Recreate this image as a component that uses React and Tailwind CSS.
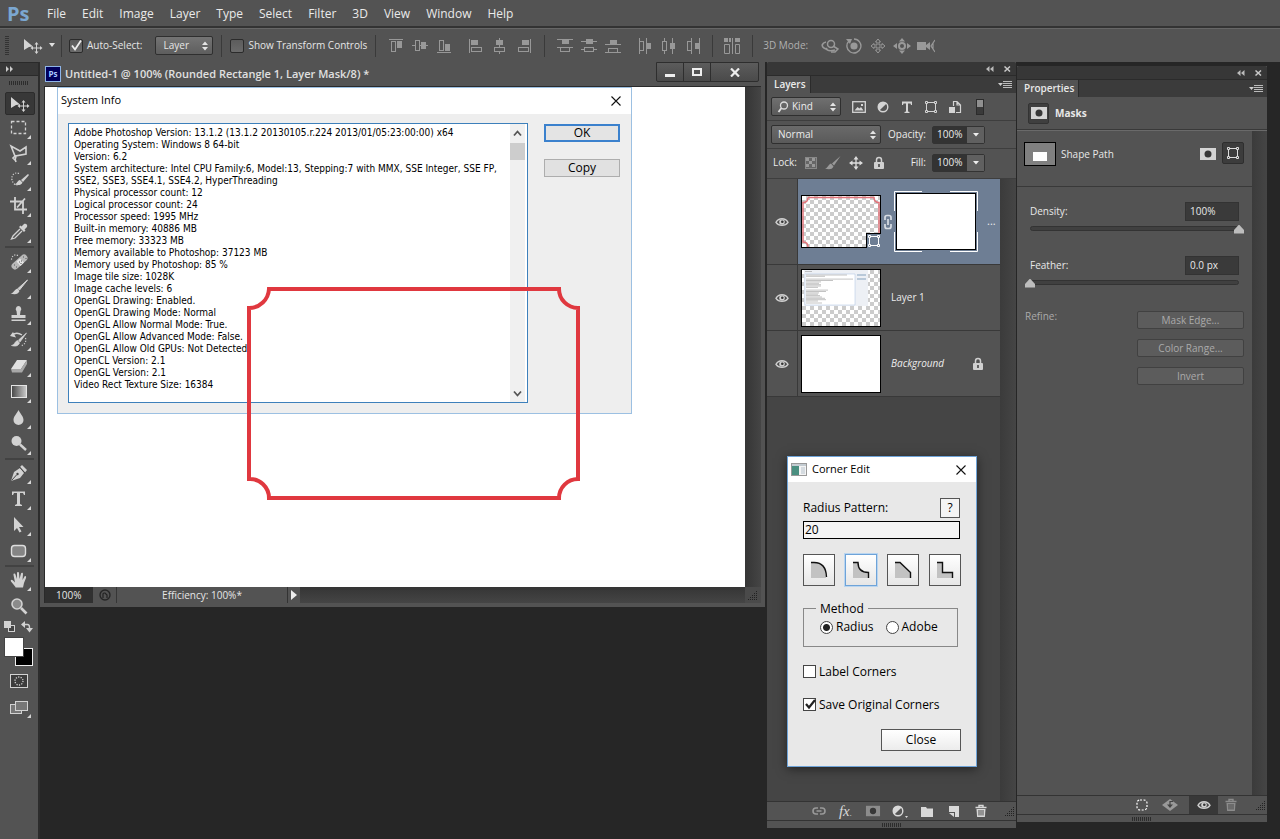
import { useState } from "react";
import clsx from "clsx";

const menus = ["File", "Edit", "Image", "Layer", "Type", "Select", "Filter", "3D", "View", "Window", "Help"];

const systemInfo = `Adobe Photoshop Version: 13.1.2 (13.1.2 20130105.r.224 2013/01/05:23:00:00) x64
Operating System: Windows 8 64-bit
Version: 6.2
System architecture: Intel CPU Family:6, Model:13, Stepping:7 with MMX, SSE Integer, SSE FP,
SSE2, SSE3, SSE4.1, SSE4.2, HyperThreading
Physical processor count: 12
Logical processor count: 24
Processor speed: 1995 MHz
Built-in memory: 40886 MB
Free memory: 33323 MB
Memory available to Photoshop: 37123 MB
Memory used by Photoshop: 85 %
Image tile size: 1028K
Image cache levels: 6
OpenGL Drawing: Enabled.
OpenGL Drawing Mode: Normal
OpenGL Allow Normal Mode: True.
OpenGL Allow Advanced Mode: False.
OpenGL Allow Old GPUs: Not Detected.
OpenCL Version: 2.1
OpenGL Version: 2.1
Video Rect Texture Size: 16384`;

function Svg({ w = 20, h = 20, className, children }) {
  return (
    <svg width={w} height={h} viewBox={`0 0 ${w} ${h}`} fill="none" stroke="none" className={clsx("block shrink-0", className)} aria-hidden="true">
      {children}
    </svg>
  );
}

/* ---------- shared glyphs ---------- */

function PathIcon({ className }) {
  return (
    <Svg w={14} h={14} className={className}>
      <path d="M2.5 4v6M11.5 4v6M4 2.5h6M4 11.5h6" stroke="currentColor" />
      <path d="M1.5 1.5h2v2h-2zM10.5 1.5h2v2h-2zM1.5 10.5h2v2h-2zM10.5 10.5h2v2h-2z" stroke="currentColor" />
    </Svg>
  );
}

function MaskIcon({ className, dot = "#383838" }) {
  return (
    <Svg w={16} h={12} className={className}>
      <rect width="16" height="12" fill="currentColor" />
      <circle cx="8" cy="6" r="3.5" fill={dot} />
    </Svg>
  );
}

function HalfCircle({ className }) {
  return (
    <Svg w={14} h={14} className={className}>
      <circle cx="7" cy="7" r="4.8" fill="#555" stroke="currentColor" strokeWidth="1.4" />
      <path d="M10.6 3.4A5 5 0 0 0 3.4 10.6z" fill="currentColor" />
    </Svg>
  );
}

function Eye() {
  return (
    <Svg w={14} h={10} className="text-[#cfcfcf]">
      <path d="M1 5.4C3.6.6 10.4.6 13 5.4 10.4 9.4 3.6 9.4 1 5.4z" fill="#4a4a4a" stroke="currentColor" strokeWidth="1.4" />
      <circle cx="7" cy="5" r="2.8" fill="currentColor" />
      <circle cx="7.3" cy="4.8" r="1.3" fill="#333" />
    </Svg>
  );
}

function Lock() {
  return (
    <Svg w={12} h={14} className="text-[#d0d0d0]">
      <path d="M3.5 6V4a2.5 2.5 0 0 1 5 0v2" stroke="currentColor" strokeWidth="1.5" />
      <rect x="1" y="6" width="10" height="7" rx="1" fill="currentColor" />
      <path d="M6 8v3" stroke="#444" strokeWidth="1.6" />
    </Svg>
  );
}

function Trash({ className }) {
  return (
    <Svg w={12} h={14} className={className}>
      <path d="M.5 3.5h11M4 3V1.5h4V3" stroke="currentColor" strokeWidth="1.4" />
      <path d="M1.5 5h9l-.6 8h-7.8z" fill="currentColor" />
      <path d="M4 6v5.5M6 6v5.5M8 6v5.5" stroke="#4a4a4a" />
    </Svg>
  );
}

function UpDown() {
  return (
    <Svg w={8} h={10} className="pointer-events-none absolute right-1 top-1/2 -translate-y-1/2">
      <path d="M1 4l3-3.5L7 4zM1 6l3 3.5L7 6z" fill="#e4e4e4" />
    </Svg>
  );
}

function Grip() {
  return (
    <Svg w={20} h={4}>
      <path d="M.5 0v4M2.5 0v4M4.5 0v4M6.5 0v4M8.5 0v4M10.5 0v4M12.5 0v4M14.5 0v4M16.5 0v4M18.5 0v4" stroke="#2c2c2c" />
    </Svg>
  );
}

function ResizeGrip() {
  return (
    <Svg w={12} h={12}>
      <path d="M1 10.5h10M3 8.5h8M5 6.5h6M7 4.5h4M9 2.5h2" stroke="#222" strokeDasharray="1 1" />
    </Svg>
  );
}

function CloseX() {
  return (
    <Svg w={10} h={10}>
      <path d="M.5.5l9 9M9.5.5l-9 9" stroke="#111" strokeWidth="1.1" />
    </Svg>
  );
}

function MoveGlyph({ className }) {
  return (
    <Svg w={20} h={16} className={className}>
      <path d="M1 1l9 7.5-4 .5-5 3z" fill="#d4d4d4" />
      <path d="M13.5 5.5v9M9 10h9" stroke="#d4d4d4" />
      <path d="M13.5 4l2 2.5h-4zM13.5 16l2-2.5h-4zM7.5 10l2.5-2v4zM19.5 10L17 8v4z" fill="#d4d4d4" />
    </Svg>
  );
}

/* ---------- options bar ---------- */

function Tick({ id, label, defaultChecked }) {
  return (
    <span className="flex items-center gap-1">
      <span className="relative flex">
        <input id={id} type="checkbox" defaultChecked={defaultChecked} className="peer size-[14px] appearance-none rounded-xs border border-[#2b2b2b] bg-linear-to-b from-[#5c5c5c] to-[#6a6a6a]" />
        <Svg w={14} h={14} className="pointer-events-none absolute left-0 top-0 hidden peer-checked:block">
          <path d="M3 6.5l3 4L12 1.5" stroke="#eee" strokeWidth="1.8" />
        </Svg>
      </span>
      <label htmlFor={id}>{label}</label>
    </span>
  );
}

const alignIcons = {
  top: <><path d="M1 1.5h14" stroke="currentColor" /><rect x="3.5" y="3.5" width="4" height="10" stroke="currentColor" /><rect x="9" y="3" width="5" height="7" fill="currentColor" /></>,
  middle: <><path d="M0 7.5h16" stroke="currentColor" /><rect x="3.5" y="2.5" width="4" height="10" fill="#535353" stroke="currentColor" /><rect x="9" y="4" width="5" height="7" fill="currentColor" /></>,
  bottom: <><path d="M1 14.5h14" stroke="currentColor" /><rect x="3.5" y="2.5" width="4" height="10" stroke="currentColor" /><rect x="9" y="6" width="5" height="7" fill="currentColor" /></>,
  left: <><path d="M1.5 1v14" stroke="currentColor" /><rect x="3" y="2" width="7" height="5" fill="currentColor" /><rect x="3.5" y="9.5" width="10" height="4" stroke="currentColor" /></>,
  center: <><path d="M7.5 0v16" stroke="currentColor" /><rect x="4" y="2" width="7" height="5" fill="currentColor" /><rect x="2.5" y="9.5" width="10" height="4" fill="#535353" stroke="currentColor" /></>,
  right: <><path d="M14.5 1v14" stroke="currentColor" /><rect x="6" y="2" width="7" height="5" fill="currentColor" /><rect x="2.5" y="9.5" width="10" height="4" stroke="currentColor" /></>,
  distTop: <><path d="M0 1.5h16M0 9.5h16" stroke="currentColor" /><rect x="5" y="2" width="7" height="4" fill="currentColor" /><rect x="3.5" y="9.5" width="9" height="4" stroke="currentColor" /></>,
  distMiddle: <><path d="M0 3.5h16M0 11.5h16" stroke="currentColor" /><rect x="5" y="1" width="7" height="5" fill="currentColor" /><rect x="3.5" y="9.5" width="9" height="4" fill="#535353" stroke="currentColor" /></>,
  distBottom: <><path d="M0 6.5h16M0 14.5h16" stroke="currentColor" /><rect x="5" y="2" width="7" height="4" fill="currentColor" /><rect x="3.5" y="10.5" width="9" height="4" stroke="currentColor" /></>,
  distLeft: <><path d="M2.5 0v16M9.5 0v16" stroke="currentColor" /><rect x="2.5" y="3.5" width="4" height="9" stroke="currentColor" /><rect x="10" y="5" width="4" height="6" fill="currentColor" /></>,
  distCenter: <><path d="M3.5 0v16M11.5 0v16" stroke="currentColor" /><rect x="1.5" y="3.5" width="4" height="9" fill="#535353" stroke="currentColor" /><rect x="9" y="5" width="5" height="6" fill="currentColor" /></>,
  distRight: <><path d="M6.5 0v16M14.5 0v16" stroke="currentColor" /><rect x="2.5" y="3.5" width="4" height="9" stroke="currentColor" /><rect x="10" y="5" width="4" height="6" fill="currentColor" /></>,
  auto: <><path d="M8.5 0v16" stroke="currentColor" /><path d="M0 0h4v4H0zM5 0h2v4H5zM11 0h5v4h-5z" fill="currentColor" /><path d="M.5 6.5h5v9h-5zM11.5 6.5h4v9h-4z" stroke="currentColor" /></>,
};

const modeIcons = {
  orbit: <><path d="M5 4C1 5 0 8 3 10l3 1.5M14 12C6 14 5 11 6 10" stroke="currentColor" strokeWidth="1.6" /><circle cx="10" cy="6" r="3.5" stroke="currentColor" strokeWidth="1.5" /><path d="M12 8l5 3-3 3h-4" stroke="currentColor" strokeWidth="1.5" /></>,
  roll: <><circle cx="9" cy="8" r="3.6" fill="currentColor" /><path d="M4 3a7 7 0 1 0 5-2" stroke="currentColor" strokeWidth="1.4" /><path d="M1 1h6L5 6z" fill="currentColor" /></>,
  pan: <path d="M9 1l2.5 3H10v3h3V5.500L16 8l-3 2.500V9h-3v3h1.500L9 15l-2.500-3H8V9H5v1.500L2 8l3-2.500V7h3V4H6.500z" stroke="currentColor" />,
  slide: <><circle cx="9" cy="8" r="3" stroke="currentColor" strokeWidth="2" /><path d="M9 0l3 3.5H6zM9 16l3-3.5H6zM0 8l4-3v6zM18 8l-4-3v6z" fill="currentColor" /></>,
  camera: <><path d="M0 4h9v8H0zM9 7l4-3v8L9 9z" fill="currentColor" /><path d="M18 2l-4 6 4 6M16 5v6" stroke="currentColor" strokeWidth="1.2" /></>,
};

function IconGroup({ names, className }) {
  return (
    <span className={clsx("flex items-center gap-2", className)}>
      {names.map((name) => (
        <button key={name} type="button" aria-label={name} className="text-[#989898]">
          <Svg w={16} h={16}>{alignIcons[name]}</Svg>
        </button>
      ))}
    </span>
  );
}

function Divider({ className }) {
  return <span className={clsx("h-[22px] w-px bg-[#3a3a3a]", className)} />;
}

function OptionsBar() {
  return (
    <div className="flex h-[34px] items-center border-t border-[#666] bg-[#535353] text-[10px] text-[#e6e6e6]">
      <Svg w={4} h={20} className="ml-[5px]">
        <path d="M0 .5h4M0 2.5h4M0 4.5h4M0 6.5h4M0 8.5h4M0 10.5h4M0 12.5h4M0 14.5h4M0 16.5h4M0 18.5h4" stroke="#333" />
      </Svg>
      <MoveGlyph className="ml-3.5" />
      <Svg w={8} h={5} className="ml-[5px]"><path d="M1 0h6L4 4z" fill="#e0e0e0" /></Svg>
      <Divider className="ml-[5px] mr-[7px]" />
      <Tick id="auto-select" label="Auto-Select:" defaultChecked />
      <span className="relative ml-[13px] w-[58px]">
        <select aria-label="Auto-select target" className="block h-[19px] w-full appearance-none rounded-xs border border-[#2f2f2f] bg-linear-to-b from-[#747474] to-[#5e5e5e] pl-[7px]">
          <option>Layer</option>
          <option>Group</option>
        </select>
        <UpDown />
      </span>
      <Divider className="mx-2" />
      <Tick id="transform-controls" label="Show Transform Controls" />
      <Divider className="ml-2 mr-3" />
      <IconGroup names={["top", "middle", "bottom"]} />
      <IconGroup names={["left", "center", "right"]} className="ml-4" />
      <Divider className="mx-3" />
      <IconGroup names={["distTop", "distMiddle", "distBottom"]} />
      <IconGroup names={["distLeft", "distCenter", "distRight"]} className="ml-4" />
      <Divider className="mx-[11px]" />
      <IconGroup names={["auto"]} />
      <Divider className="ml-3 mr-2.5" />
      <span className="w-[58px] text-[#b0b0b0]">3D Mode:</span>
      <span className="flex gap-1.5">
        {Object.entries(modeIcons).map(([name, icon]) => (
          <button key={name} type="button" aria-label={name} className="text-[#999]">
            <Svg w={18} h={16}>{icon}</Svg>
          </button>
        ))}
      </span>
    </div>
  );
}

/* ---------- toolbox ---------- */

const c = "#d2d2d2";
const toolGroups = [
  [
    ["Marquee", <rect x="2.5" y="3.5" width="14" height="12" stroke={c} strokeWidth="1.3" strokeDasharray="3 2" />],
    ["Lasso", <path d="M2 2l4 10L17 10V3l-6 4zM6 12l-2 2 2 2 1-3.5M6 15l1 3" stroke={c} strokeWidth="1.6" />],
    ["Quick selection", <><path d="M10 3.5C5 1.5 2 6 3 10s4 6 7 4" stroke={c} strokeWidth="1.2" strokeDasharray="1.2 1.5" /><path d="M19 4l-7 6 2 2 6-7z" fill={c} /><path d="M11 10l2.5 2.5C12 16 8 15 5 14.5c3 0 3-4 6-4.5z" fill={c} /></>],
    ["Crop", <path d="M1 5.5h13V18M6 1v12.5h12M8 11.5l8-9" stroke={c} strokeWidth="1.8" />],
    ["Eyedropper", <><path d="M11 7l-7 7-1.5 3L6 16l7-7" stroke={c} strokeWidth="1.3" /><path d="M10 5l5 5 1.5-1.5-1-1L18 5c1-2-1-4-3-3l-2.5 2.5-1-1z" fill={c} /></>],
  ],
  [
    ["Healing brush", <><path d="M9 3.5C5 1.5 2 5 2.5 9" stroke={c} strokeWidth="1.2" strokeDasharray="1.2 1.5" /><rect x="1" y="6.5" width="19" height="7" rx="3.5" transform="rotate(-42 10.5 10)" fill="#b9b9b9" /><path d="M7.5 9.5l4 4.5 3.5-3.5L11 6.5z" fill="#e4e4e4" /><path d="M10 10h1M12 9h1M11.5 11.5h1M5 13h1M7 15h1M14 5h1M16.5 6.5h1" stroke="#555" /></>],
    ["Brush", <><path d="M18.5 2L9 10.5l1.5 1.5z" fill={c} stroke={c} /><path d="M8.5 10.5l2 2.5C9 17 5 16.5 1.5 15.5 5 15 5 11.5 8.5 10.5z" fill={c} /></>],
    ["Clone stamp", <path d="M9.500 2a3 3 0 0 1 2 5l-.5 4h5.500v3h-14v-3H8l-.5-4a3 3 0 0 1 2-5zM2.500 15.500h14V17h-14z" fill={c} />],
    ["History brush", <><path d="M3 5c4-3 7-2 10 0" stroke={c} strokeWidth="1.5" /><path d="M1 6l6 1.5L4 2z" fill={c} /><path d="M17.5 3L9.500 10l1.500 2zM8.500 10.500l2 2.500c-1.500 3.500-5 3.500-8 2.500 3 0 3-4 6-5z" fill={c} stroke={c} strokeWidth=".7" /><path d="M16.5 8c1 4-1 7-5 8" stroke={c} strokeWidth="1.2" strokeDasharray="1.2 1.5" /></>],
    ["Eraser", <><path d="M8 4h10l-6 9H2z" fill="#e0e0e0" /><path d="M2 13h10v3.5H3zM12 13l6-9v4l-5 8.5h-1z" fill="#a8a8a8" /></>],
    ["Gradient", <><defs><linearGradient id="tool-grad"><stop stopColor="#444" /><stop offset="1" stopColor="#ccc" /></linearGradient></defs><rect x="2.5" y="3.5" width="15" height="12" fill="url(#tool-grad)" stroke="#e4e4e4" /></>],
    ["Blur", <path d="M9.5 2c2 4 5 6.5 5 10a5 5 0 0 1-10 0c0-3.500 3-6 5-10z" fill={c} />],
    ["Dodge", <><circle cx="7.5" cy="7" r="5" fill={c} /><path d="M11 10.5l6 5.5" stroke={c} strokeWidth="2.4" /></>],
  ],
  [
    ["Pen", <><path d="M2 18l3-9 6-4 4 5-4 5z" fill={c} /><path d="M11 4l2-2 5 5-2 2.5z" fill={c} /><path d="M2.5 17.5l5-5.5M10.500 4l5.500 6" stroke="#444" /><circle cx="8.5" cy="11" r="1.2" fill="#444" /></>],
    ["Type", <path d="M3 2.5h13V6h-1l-1-2h-3v11l2 1v1H6v-1l2-1V4H5L4 6H3z" fill={c} />],
    ["Path selection", <path d="M5 2l9.5 10H10l2.5 4.5-2 1L8 13l-3 3z" fill={c} />],
    ["Rounded rectangle", <rect x="2.5" y="4.5" width="14" height="11" rx="3" fill="#858585" stroke="#dedede" strokeWidth="1.4" />],
  ],
  [
    ["Hand", <path d="M6.5 17L2 11.5c-1-1.500 1-2.500 2-1l2 2L4.500 5c-.3-1.600 1.600-2 2-.4L8 9V3c0-1.500 2-1.500 2 0l.5 6 1.500-5.500c.4-1.400 2.200-1 2 .5L13.500 10l2-3.500c1-1 2 0 1.500 1.500L15 13l-1 4.500H6.500z" fill={c} />],
    ["Zoom", <><circle cx="8" cy="8" r="5" fill="#8b8b8b" stroke={c} strokeWidth="1.6" /><path d="M12 12l5.5 5.5" stroke={c} strokeWidth="2.6" /></>, true],
  ],
];

function ToolButton({ label, plain, children }) {
  return (
    <button type="button" aria-label={label} className="flex h-[26px] w-full items-center pl-[9px]">
      <Svg w={24} h={24}>
        <g transform="translate(0 2)">{children}</g>
        {!plain && <path d="M22 19v4h-4z" fill="#d8d8d8" />}
      </Svg>
    </button>
  );
}

function Toolbox() {
  return (
    <aside className="flex w-10 shrink-0 flex-col border-r-2 border-[#2c2c2c] bg-[#535353]">
      <div className="flex h-3.5 items-center border-y border-[#2a2a2a] bg-[#383838] pl-1.5">
        <Svg w={8} h={6}><path d="M0 0l3 3-3 3zM4 0l3 3-3 3z" fill="#ccc" /></Svg>
      </div>
      <div className="flex h-4 items-center justify-center pb-2 pt-1.5"><Grip /></div>
      <button type="button" aria-label="Move" className="ml-[5px] flex h-[23px] w-[30px] items-center rounded-xs border border-[#2c2c2c] bg-[#383838] pl-1">
        <MoveGlyph />
      </button>
      {toolGroups.map((group, index) => (
        <div key={index}>
          {index > 0 && <hr className="ml-[5px] mt-px w-[29px] border-t-2 border-[#424242]" />}
          <div className={clsx(index === 1 && "pt-px")}>
            {group.map(([label, icon, plain]) => (
              <ToolButton key={label} label={label} plain={plain}>{icon}</ToolButton>
            ))}
          </div>
        </div>
      ))}
      <div className="flex h-4 items-center gap-1 pl-1">
        <Svg w={12} h={12}>
          <rect x="4.5" y="4.5" width="6" height="6" fill="#444" stroke={c} />
          <rect width="7" height="7" fill={c} />
        </Svg>
        <Svg w={14} h={12}>
          <path d="M4 3.5h3.5q2 0 2 3V8" stroke={c} strokeWidth="1.4" />
          <path d="M5 0v7L1 3.5zM6 7h7l-3.5 4.5z" fill={c} />
        </Svg>
      </div>
      <div className="ml-1 mt-0.5 grid h-[29px] w-[29px]">
        <button type="button" aria-label="Background color" className="col-start-1 row-start-1 size-[18px] place-self-end border border-[#eee] bg-black" />
        <button type="button" aria-label="Foreground color" className="col-start-1 row-start-1 size-5 border border-[#444] bg-white" />
      </div>
      <button type="button" aria-label="Quick mask" className="ml-2.5 mt-2">
        <Svg w={18} h={14}>
          <rect x=".5" y=".5" width="17" height="13" fill="#3c3c3c" stroke={c} />
          <circle cx="9" cy="7" r="4" stroke={c} strokeWidth="1.3" strokeDasharray="1.2 1.3" />
        </Svg>
      </button>
      <button type="button" aria-label="Screen mode" className="ml-2.5 mt-3">
        <Svg w={22} h={18}>
          <rect x=".5" y="4.5" width="11" height="9" fill="#777" stroke={c} />
          <rect x="5.5" y="1.5" width="12" height="9" fill="#777" stroke={c} />
          <path d="M21 14v4h-4z" fill={c} />
        </Svg>
      </button>
    </aside>
  );
}

/* ---------- document ---------- */

function SystemInfoDialog() {
  return (
    <section className="ml-3 w-[575px] border border-[#9cc0e2] bg-[#eeeeee] text-black">
      <header className="flex h-[26px] items-center justify-between bg-white pb-px pl-[3px] pr-2.5 text-[11px]">
        <h2>System Info</h2>
        <button type="button" aria-label="Close System Info"><CloseX /></button>
      </header>
      <div className="flex items-start gap-4 px-2.5 pb-2.5 pt-[9px]">
        <div className="flex h-[280px] flex-1 border border-[#3d80bb] bg-white">
          <textarea readOnly aria-label="System information" value={systemInfo} className="flex-1 resize-none overflow-hidden whitespace-pre pl-[5px] pt-[3px] font-['DejaVu_Sans_Condensed','Noto_Sans',sans-serif] text-[10px] leading-[12px] outline-none" />
          <div className="mr-0.5 flex w-[15px] flex-col items-center bg-[#f0f0f0] pb-[5px] pt-1.5">
            <Svg w={9} h={7}><path d="M1 5.5l3.5-4L8 5.5" stroke="#555" strokeWidth="1.8" /></Svg>
            <span className="mt-1.5 h-[17px] w-full bg-[#cdcdcd]" />
            <Svg w={9} h={7} className="mt-auto"><path d="M1 1.5l3.5 4L8 1.5" stroke="#555" strokeWidth="1.8" /></Svg>
          </div>
        </div>
        <div className="mr-px flex w-[76px] flex-col gap-[17px] pt-px text-[12px]">
          <button type="button" className="h-[18px] border-2 border-[#3b81cd] bg-[#e4e4e4] leading-none">OK</button>
          <button type="button" className="h-[18px] border border-[#adadad] bg-[#e1e1e1] leading-none">Copy</button>
        </div>
      </div>
    </section>
  );
}

function DocumentWindow() {
  return (
    <main className="min-w-0 flex-1 self-start border-x-4 border-b-4 border-[#535353] bg-[#535353] text-[10px] text-[#e6e6e6]">
      <header className="flex h-[25px] items-center border-b border-[#2a2a2a] pl-px">
        <span className="flex size-4 items-center justify-center border border-[#8db4e8] bg-[#00005c] text-[8px] font-bold text-[#a9ccff]">Ps</span>
        <h1 className="ml-1 flex-1 pt-px text-[11px] font-semibold text-[#e0e0e0]">Untitled-1 @ 100% (Rounded Rectangle 1, Layer Mask/8) *</h1>
        <div className="mr-0.5 flex h-5 self-start overflow-hidden rounded-b-xs border border-[#2e2e2e] bg-linear-to-b from-[#5c5c5c] to-[#4a4a4a]">
          <button type="button" aria-label="Minimize" className="flex w-[27px] items-center justify-center border-r border-[#2e2e2e]">
            <span className="mt-1.5 h-[3px] w-2.5 bg-[#eee]" />
          </button>
          <button type="button" aria-label="Maximize" className="flex w-[27px] items-center justify-center border-r border-[#2e2e2e]">
            <span className="h-2 w-2.5 border-2 border-[#eee]" />
          </button>
          <button type="button" aria-label="Close document" className="flex w-[47px] items-center justify-center">
            <Svg w={10} h={9}><path d="M1 .5l8 8M9 .5l-8 8" stroke="#eee" strokeWidth="2.2" /></Svg>
          </button>
        </div>
      </header>
      <div className="flex border-l border-[#2a2a2a]">
        <div className="relative h-[500px] flex-1 bg-white">
          <SystemInfoDialog />
          <svg width="334" height="214" viewBox="0 0 334 214" fill="none" className="pointer-events-none absolute left-[202px] top-[200px]" aria-hidden="true">
            <path d="M22 2h290a19 19 0 0 0 19 19v171a19 19 0 0 0-19 19H22a19 19 0 0 0-20-19V21a20 20 0 0 0 20-19z" stroke="#e0383f" strokeWidth="4" />
          </svg>
        </div>
        <div className="w-4 bg-linear-to-r from-[#353535] to-[#454545]" />
      </div>
      <footer className="flex h-4 items-stretch border-l border-[#2a2a2a] bg-linear-to-b from-[#353535] to-[#454545]">
        <input aria-label="Zoom" defaultValue="100%" className="w-12 bg-[#303030] pl-[11px] outline-none" />
        <span className="flex w-6 items-center justify-center border-r border-[#363636] bg-[#535353]">
          <Svg w={12} h={12}>
            <circle cx="6" cy="6" r="5" stroke="#262626" strokeWidth="1.4" />
            <path d="M4 9V5q0-1 1-1h1l2 2v3" stroke="#222" strokeWidth="1.2" />
          </Svg>
        </span>
        <span className="w-[170px] bg-[#535353] text-center leading-4">Efficiency: 100%*</span>
        <button type="button" aria-label="Status options" className="flex w-[13px] items-center justify-center border-l border-[#333] bg-[#535353]">
          <Svg w={7} h={10}><path d="M0 0l6 5-6 5z" fill="#eee" /></Svg>
        </button>
        <span className="ml-auto flex w-4 items-end justify-end bg-[#4a4a4a] p-0.5"><ResizeGrip /></span>
      </footer>
    </main>
  );
}

/* ---------- panels ---------- */

function PanelHead({ title }) {
  return (
    <>
      <div className="flex h-3.5 items-center justify-end gap-2.5 rounded-t-xs border-b border-[#2b2b2b] bg-[#373737] pr-[5px]">
        <Svg w={8} h={6}><path d="M3.5 0v6L0 3zM7.5 0v6L4 3z" fill="#bbb" /></Svg>
        <Svg w={7} h={6}><path d="M.5.5L6 5.5M6 .5L.5 5.5" stroke="#c8c8c8" strokeWidth="1.5" /></Svg>
      </div>
      <div className="flex h-[17px] items-stretch justify-between bg-[#3b3b3b]">
        <h2 className="border-r border-[#2b2b2b] bg-[#535353] pl-[7px] pr-1 text-[10px] font-semibold leading-[16px]">{title}</h2>
        <button type="button" aria-label={`${title} menu`} className="pr-1">
          <Svg w={14} h={9}>
            <path d="M0 3h5L2.5 6z" fill="#ccc" />
            <path d="M5 1.5h9M5 3.5h9M5 5.5h9M5 7.5h9" stroke="#bbb" />
          </Svg>
        </button>
      </div>
    </>
  );
}

function PanelGrip() {
  return <div className="flex h-2 items-center justify-center border-t border-[#333] bg-[#535353]"><Grip /></div>;
}

function PercentBox({ label }) {
  return (
    <span className="flex items-center gap-1.5">
      <label htmlFor={label}>{label}:</label>
      <span className="flex h-[18px] rounded-xs border border-[#333]">
        <input id={label} defaultValue="100%" className="w-[34px] bg-[#333] pl-1 outline-none" />
        <button type="button" aria-label={`${label} slider`} className="flex w-[17px] items-center justify-center bg-[#606060]">
          <Svg w={6} h={4}><path d="M0 0h6L3 3.5z" fill="#eee" /></Svg>
        </button>
      </span>
    </span>
  );
}

function Thumb({ checker, className, children }) {
  return (
    <span className={clsx("relative block w-20 shrink-0 border border-black", checker ? "bg-[repeating-conic-gradient(#cccccc_0_25%,#ffffff_0_50%)] bg-[length:8px_8px]" : "bg-white", className)}>
      {children}
    </span>
  );
}

function LayerRow({ selected, children }) {
  return (
    <li className={clsx("flex border-b border-[#393939]", selected ? "h-[86px]" : "h-[66px]")}>
      <button type="button" aria-label="Toggle visibility" className="flex w-[31px] shrink-0 items-center justify-center border-r border-[#393939] bg-[#535353]">
        <Eye />
      </button>
      <div className={clsx("flex min-w-0 flex-1 items-center pl-[3px]", selected ? "bg-[#6e7e94]" : "bg-[#535353]")}>{children}</div>
    </li>
  );
}

const layerActions = [
  ["Link layers", <Svg w={14} h={10} className="text-[#999]"><path d="M6 2H4a3 3 0 0 0 0 6h2M8 2h2a3 3 0 0 1 0 6H8M4.5 5h5" stroke="currentColor" strokeWidth="1.6" /></Svg>],
  ["Layer style", <span className="font-['Liberation_Serif',serif] text-[15px] italic leading-none">fx<span className="text-[9px]">.</span></span>],
  ["Add mask", <MaskIcon className="scale-90 text-[#8c8c8c]" />],
  ["Adjustment layer", <span className="flex items-end"><HalfCircle /><Svg w={3} h={3}><path d="M0 1h3L1.5 3z" fill="currentColor" /></Svg></span>],
  ["New group", <Svg w={12} h={11}><path d="M0 1h5l1 1.5h6V11H0z" fill="currentColor" /></Svg>],
  ["New layer", <Svg w={11} h={11}><path d="M1 0h10v11H7V6H1z" fill="currentColor" /><path d="M1 7h5v4z" fill="currentColor" /></Svg>],
  ["Delete layer", <Trash />],
];

function LayersPanel() {
  return (
    <section className="mb-[11px] ml-0.5 flex w-[249px] shrink-0 flex-col bg-[#535353] text-[10px] text-[#ececec]">
      <PanelHead title="Layers" />
      <div className="flex h-7 items-center border-b border-[#3e3e3e] pl-1">
        <span className="relative w-[70px]">
          <select aria-label="Filter kind" className="block h-[19px] w-full appearance-none rounded-xs border border-[#2f2f2f] bg-linear-to-b from-[#707070] to-[#5a5a5a] pl-5">
            <option>Kind</option>
          </select>
          <Svg w={12} h={12} className="pointer-events-none absolute left-1.5 top-1">
            <circle cx="7" cy="4.5" r="3.5" stroke="#ddd" strokeWidth="1.3" />
            <path d="M4.5 7l-3 4" stroke="#ddd" strokeWidth="1.8" />
          </Svg>
          <UpDown />
        </span>
        <span className="ml-[11px] flex items-center gap-2.5 text-[#d4d4d4]">
          <Svg w={14} h={14}>
            <rect x=".7" y="1.7" width="12.6" height="10.6" stroke="currentColor" strokeWidth="1.3" />
            <path d="M2.5 10.5L5.5 7l2 1.5L9 7l2.5 3.5z" fill="currentColor" />
            <path d="M9 4h2v2H9z" fill="currentColor" />
          </Svg>
          <HalfCircle />
          <Svg w={14} h={14}><path d="M2 1.5h10V5h-1l-.5-1.500H8v8l1.500.5v1h-5v-1l1.500-.5v-8H3.500L3 5H2z" fill="currentColor" /></Svg>
          <PathIcon />
          <Svg w={14} h={14}>
            <path d="M5.5 6V1.5H9L12.5 5v7.5H8M9 1.5V5h3.5" stroke="currentColor" strokeWidth="1.2" />
            <rect x="1" y="7" width="6" height="6" fill="currentColor" />
          </Svg>
          <span className="ml-1 h-4 w-2 border border-[#2c2c2c] bg-linear-to-b from-[#909090] from-50% to-[#3a3a3a] to-50%" />
        </span>
      </div>
      <div className="flex h-7 items-center justify-between border-b border-[#3e3e3e] pl-1 pr-[31px]">
        <span className="relative w-[110px]">
          <select aria-label="Blend mode" className="block h-[19px] w-full appearance-none rounded-xs border border-[#2f2f2f] bg-linear-to-b from-[#6a6a6a] to-[#5a5a5a] pl-1.5">
            <option>Normal</option>
          </select>
          <UpDown />
        </span>
        <PercentBox label="Opacity" />
      </div>
      <div className="flex h-[30px] items-center justify-between border-b border-[#3e3e3e] pb-0.5 pl-1.5 pr-[31px]">
        <span className="flex items-center gap-2">
          <span>Lock:</span>
          <Svg w={12} h={12}>
            <rect x=".5" y=".5" width="11" height="11" fill="#666" stroke="#888" />
            <path d="M1 1h3v3H1zM7 1h3v3H7zM4 4h3v3H4zM1 7h3v3H1zM7 7h3v3H7z" fill="#999" />
          </Svg>
          <Svg w={16} h={14}><path d="M15.5 0L7 7.5l2 2zM6 7.5l2.5 3C7 14 3 13.5 0 12.5c3-.5 3-4 6-5z" fill="#999" /></Svg>
          <Svg w={14} h={14}>
            <path d="M7 2v10M2 7h10" stroke="#ddd" strokeWidth="1.3" />
            <path d="M7 0l2.5 3.5h-5zM7 14l2.5-3.5h-5zM0 7l3.5-2.5v5zM14 7l-3.5-2.5v5z" fill="#ddd" />
          </Svg>
          <span className="pl-0.5"><Lock /></span>
        </span>
        <PercentBox label="Fill" />
      </div>
      <div className="flex flex-1">
        <ul className="flex-1 bg-[#454545]">
          <LayerRow selected>
            <Thumb checker className="h-[53px]">
              <svg viewBox="0 0 78 51" className="block size-full" fill="none" aria-hidden="true">
                <path d="M6 1.5h66q0 5 5 5v39M6 51q0-5-5-5V6.5q5 0 5-5" stroke="#e0737a" strokeWidth="1.5" />
              </svg>
              <span className="absolute -bottom-px -right-px border-l border-t border-black bg-[#6e7e94] text-white"><PathIcon /></span>
            </Thumb>
            <Svg w={10} h={16} className="ml-0.5 mr-px">
              <path d="M2 6V3.5q0-2 2-2h2q2 0 2 2V6M2 10v2.5q0 2 2 2h2q2 0 2-2V10M5 5v6" stroke="#d8dde4" strokeWidth="1.7" />
            </Svg>
            <span className="relative block h-[61px] w-[84px] shrink-0 p-0.5">
              <Svg w={84} h={61} className="absolute left-0 top-0">
                <path d="M.5 20V.5H28M56 .5h27.5V20M83.5 41v19.5H56M28 60.5H.5V41" stroke="#fff" />
              </Svg>
              <span className="block h-full border border-black bg-white" />
            </span>
            <span className="ml-[9px] text-[11px]">...</span>
          </LayerRow>
          <LayerRow>
            <Thumb checker className="h-[58px]">
              <svg viewBox="0 0 78 56" className="block size-full" aria-hidden="true">
                <path d="M2 0h64v36H2z" fill="#edf0f5" />
                <path d="M3 4h50v31H3z" fill="#fff" stroke="#a9c3e0" strokeWidth=".5" />
                <path d="M3 1.5h7M4 5h41M4 6.3h19M4 9.1h47M4 10.5h27M4 11.9h15M4 13.3h13M4 14.7h15M4 16h15M4 17.4h12M4 20.1h22M4 21.5h20M4 22.9h13M4 24.2h12M4 25.6h14M4 27h16M4 28.3h19M4 29.7h20M4 31h12M4 33h16" stroke="#9a9a9a" strokeWidth=".6" />
                <path d="M55 5h9M55 9h9" stroke="#a8bcd0" strokeWidth="1.5" />
              </svg>
            </Thumb>
            <span className="ml-2.5 text-[10px]">Layer 1</span>
          </LayerRow>
          <LayerRow>
            <Thumb className="h-[58px]" />
            <span className="ml-2.5 flex-1 text-[10px] italic">Background</span>
            <span className="mr-4"><Lock /></span>
          </LayerRow>
        </ul>
        <div className="w-4 bg-linear-to-r from-[#3b3b3b] to-[#454545]" />
      </div>
      <div className="flex h-[19px] shrink-0 items-center border-t border-[#333] bg-[#535353] pl-10 text-[#d8d8d8]">
        {layerActions.map(([label, icon]) => (
          <button key={label} type="button" aria-label={label} className="flex w-[27px] shrink-0 justify-center pr-1">{icon}</button>
        ))}
        <span className="ml-auto"><ResizeGrip /></span>
      </div>
      <PanelGrip />
    </section>
  );
}

function SliderField({ label, defaultText, value }) {
  return (
    <div className="mb-5">
      <div className="flex h-5 items-center justify-between pr-[5px]">
        <label htmlFor={label} className="pl-[5px]">{label}:</label>
        <input aria-label={`${label} value`} defaultValue={defaultText} className="h-[19px] w-[54px] border border-[#333] bg-[#3a3a3a] pl-1 outline-none" />
      </div>
      <div className="relative mt-0.5 flex h-3 items-center">
        <span className="absolute inset-x-[5px] top-[3px] h-[5px] rounded-full border border-[#333] bg-[#404040]" />
        <input id={label} type="range" defaultValue={value} className="relative h-3 w-full appearance-none bg-transparent [&::-webkit-slider-thumb]:h-[9px] [&::-webkit-slider-thumb]:w-[10px] [&::-webkit-slider-thumb]:appearance-none [&::-webkit-slider-thumb]:bg-[#bdbdbd] [&::-webkit-slider-thumb]:[clip-path:polygon(50%_0,100%_60%,100%_100%,0_100%,0_60%)]" />
      </div>
    </div>
  );
}

function PropertiesPanel() {
  return (
    <section className="mb-[17px] ml-px mr-[13px] mt-1 flex w-[250px] shrink-0 flex-col bg-[#535353] text-[10px] text-[#e8e8e8]">
      <PanelHead title="Properties" />
      <div className="flex h-[33px] items-center gap-1.5 border-b border-[#393939] pl-[11px] font-bold">
        <span className="flex size-[21px] items-center justify-center rounded-xs border border-[#333] bg-[#3f3f3f]">
          <MaskIcon className="text-[#d4d4d4]" />
        </span>
        Masks
      </div>
      <div className="flex flex-1 border-t border-[#6a6a6a]">
        <div className="flex-1">
          <div className="flex h-14 items-start border-b border-[#393939] pl-[7px] pr-2 pt-[11px]">
            <span className="flex h-6 w-8 items-center justify-center border border-black bg-[#808080] pt-1"><span className="h-[9px] w-3.5 bg-white" /></span>
            <span className="ml-[5px] flex-1 leading-6">Shape Path</span>
            <button type="button" aria-label="Select pixel mask" className="mr-1.5 mt-1.5"><MaskIcon className="text-[#d4d4d4]" /></button>
            <button type="button" aria-label="Select vector mask" className="flex size-[22px] items-center justify-center rounded-xs border border-[#2e2e2e] bg-[#3c3c3c] text-[#ddd]"><PathIcon /></button>
          </div>
          <div className="px-2 pt-3.5">
            <SliderField label="Density" defaultText="100%" value={100} />
            <SliderField label="Feather" defaultText="0.0 px" value={0} />
            <div className="flex justify-between text-[#aaa]">
              <span>Refine:</span>
              <div className="flex w-[107px] flex-col gap-2.5 pt-0.5">
                {["Mask Edge...", "Color Range...", "Invert"].map((label) => (
                  <button key={label} type="button" className="h-[18px] rounded-xs border border-[#414141] bg-[#5c5c5c] leading-none">{label}</button>
                ))}
              </div>
            </div>
          </div>
        </div>
        <div className="w-[15px] bg-linear-to-r from-[#3b3b3b] to-[#454545]" />
      </div>
      <div className="flex h-[19px] shrink-0 items-center justify-end border-t border-[#333] text-[#ddd]">
        <button type="button" aria-label="Load selection" className="mr-3.5">
          <Svg w={12} h={12}><rect x="1" y="1" width="10" height="10" rx="3" stroke="#fff" strokeWidth="1.2" strokeDasharray="2 1.5" /></Svg>
        </button>
        <button type="button" aria-label="Apply mask" className="mr-[11px]">
          <Svg w={16} h={12}>
            <path d="M8 0l8 6-8 6-8-6z" fill="#999" />
            <path d="M11 2.5H8V7" stroke="#444" strokeWidth="1.2" />
            <path d="M5 5.5h6L8 9z" fill="#444" />
          </Svg>
        </button>
        <button type="button" aria-label="Toggle mask" className="flex h-full w-[29px] items-center justify-center bg-[#383838]"><Eye /></button>
        <button type="button" aria-label="Delete mask" className="ml-[7px] mr-[18px]"><Trash className="text-[#8c8c8c]" /></button>
        <ResizeGrip />
      </div>
      <PanelGrip />
    </section>
  );
}

/* ---------- corner edit ---------- */

const corners = [
  ["Round", "M1 1.5h3Q16 1.5 16.5 16", "M1 1h3Q16 1 16 17H1z"],
  ["Inverted round", "M1 1.5h5Q6 11.5 16.5 11.5V17", "M1 1h5Q6 11.5 16.5 11.5V17H1z"],
  ["Chamfer", "M1 1.5h5l10.5 10V17", "M1 1h5l11 10.5V17H1z"],
  ["Inset", "M1 1.5h5.5v10h10V17", "M1 1h5v11h11v5H1z"],
];

function CheckRow({ id, label, defaultChecked }) {
  return (
    <div className="flex h-[13px] items-center gap-[3px]">
      <span className="relative flex">
        <input id={id} type="checkbox" defaultChecked={defaultChecked} className="peer size-[13px] appearance-none border border-[#444] bg-white" />
        <Svg w={13} h={13} className="pointer-events-none absolute left-0 top-0 hidden peer-checked:block">
          <path d="M3 6l3 3.5L12 2" stroke="#222" strokeWidth="2.2" />
        </Svg>
      </span>
      <label htmlFor={id}>{label}</label>
    </div>
  );
}

function CornerEditDialog() {
  const [corner, setCorner] = useState("Inverted round");
  const [method, setMethod] = useState("Radius");

  return (
    <section className="absolute left-[787px] top-[456px] w-[190px] border border-[#6ea3d8] bg-[#e8e8e8] text-[12px] text-black shadow-[0_2px_10px_rgba(0,0,0,0.5)]">
      <header className="flex h-[25px] items-center bg-white pl-[3px] pr-2.5">
        <Svg w={16} h={14}>
          <rect x=".5" y=".5" width="15" height="12" fill="#f4f4f4" stroke="#999" />
          <path d="M1 3h7v9H1z" fill="#4a8f80" />
          <path d="M1 1h14v2H1z" fill="#c4ccd2" />
          <path d="M10 4h4v7h-4z" fill="#d5dbe0" />
        </Svg>
        <h2 className="ml-[5px] flex-1 text-[11px]">Corner Edit</h2>
        <button type="button" aria-label="Close Corner Edit"><CloseX /></button>
      </header>
      <div className="py-[15px] pl-[15px] pr-4">
        <div className="flex h-5 items-center justify-between pt-px">
          <label htmlFor="pattern">Radius Pattern:</label>
          <button type="button" className="size-5 border border-[#555] bg-[#f4f4f4] leading-none">?</button>
        </div>
        <input id="pattern" defaultValue="20" className="mt-1 block h-[18px] w-full border border-black bg-[#f4f4f4] pl-px outline-none" />
        <div className="mt-[15px] flex gap-2.5">
          {corners.map(([label, line, area]) => (
            <button
              key={label}
              type="button"
              aria-label={label}
              onClick={() => setCorner(label)}
              className={clsx("flex size-8 shrink-0 items-center justify-center border bg-linear-to-b from-white to-[#e6e6e6]", corner === label ? "border-[#6ea3d8] ring-1 ring-[#b9d5f0]" : "border-[#555]")}
            >
              <Svg w={18} h={18}>
                <path d={area} fill="#c2c2c2" />
                <path d={line} stroke="#111" strokeWidth="1.4" />
              </Svg>
            </button>
          ))}
        </div>
        <fieldset className="mt-3.5 h-[47px] w-[155px] border border-[#888] pl-4">
          <legend className="-ml-1 h-4 px-1 leading-[18px]">Method</legend>
          <div className="flex items-center gap-3 pt-0.5">
            {["Radius", "Adobe"].map((name) => (
              <span key={name} className="flex items-center gap-[3px]">
                <input id={name} type="radio" name="method" checked={method === name} onChange={() => setMethod(name)} className="size-[13px] appearance-none rounded-full border border-[#444] bg-white checked:bg-[radial-gradient(circle,#222_0_3px,#fff_4px)]" />
                <label htmlFor={name} className="leading-[18px]">{name}</label>
              </span>
            ))}
          </div>
        </fieldset>
        <div className="mt-[18px] flex flex-col gap-5">
          <CheckRow id="label-corners" label="Label Corners" />
          <CheckRow id="save-corners" label="Save Original Corners" defaultChecked />
        </div>
        <button type="button" className="ml-[78px] mt-[18px] block h-[22px] w-20 border border-[#555] bg-linear-to-b from-white to-[#ececec] leading-none">Close</button>
      </div>
    </section>
  );
}

export default function App() {
  return (
    <div className="relative flex min-h-screen flex-col bg-[#262626] font-['Open_Sans','Noto_Sans',sans-serif]">
      <nav className="flex h-7 items-center border-b-2 border-[#333] bg-[#535353] pl-[7px] pt-0.5 text-[12px] text-[#eaeaea]">
        <span className="w-8 text-[20px] font-bold leading-none text-[#7ba7d1]">Ps</span>
        {menus.map((menu) => (
          <button key={menu} type="button" className="px-2">{menu}</button>
        ))}
      </nav>
      <OptionsBar />
      <div className="flex flex-1">
        <Toolbox />
        <DocumentWindow />
        <LayersPanel />
        <PropertiesPanel />
      </div>
      <CornerEditDialog />
    </div>
  );
}
